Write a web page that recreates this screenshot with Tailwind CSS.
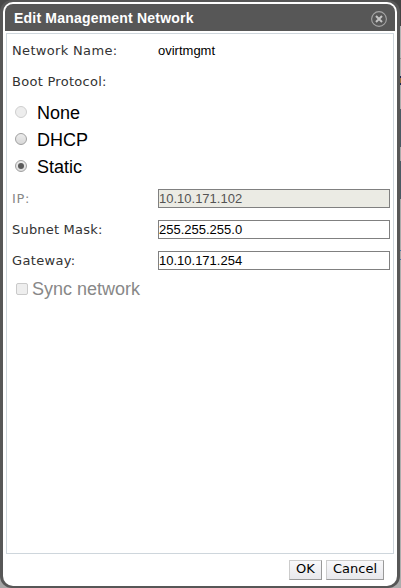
<!DOCTYPE html>
<html lang="en">
<head>
<meta charset="utf-8">
<title>Edit Management Network</title>
<script src="https://cdn.jsdelivr.net/npm/@tailwindcss/browser@4"></script>
</head>
<body class="relative h-[588px] w-[401px] overflow-hidden bg-[#484848] font-['Liberation_Sans',Arial,sans-serif] text-black">
<!-- page behind the dialog -->
<div class="absolute top-0 right-0 flex h-full w-5 flex-col">
  <div class="h-[26px] bg-[#444]"></div>
  <div class="h-[33px] border-b border-[#888] bg-[#b4b4b4]"></div>
  <div class="h-[50px] bg-[#adadad] pt-[17px]"><div class="h-[9px] border-y-2 border-[#182850] bg-[#9a7040]"></div></div>
  <div class="h-[38px] bg-[#4b5a64]"></div>
  <div class="h-[14px] bg-[#aaa]"></div>
  <div class="h-[38px] bg-[#4b5a64]"></div>
  <div class="h-[51px] bg-[#aaa]"></div>
  <div class="h-[10px] border-y border-[#4870a0] bg-[#aaa]"></div>
  <div class="flex-1 bg-[#adadad]"></div>
</div>
<div class="absolute bottom-0 left-0 h-5 w-5 bg-[#a6a6a6]"></div>

<div class="relative h-[588px] w-[400px] rounded-[12px] bg-[#575757] pt-[2px] pr-[3px] pb-[2px] pl-[3px]">
  <div class="flex h-[584px] flex-col rounded-[10px] bg-white px-[2px] pt-[2px]">
    <header class="flex h-[27px] shrink-0 items-center justify-between rounded-t-[8px] bg-[#575757] pr-[8px] pl-[9px]">
      <h1 class="text-[14px] leading-[26px] font-bold tracking-[0.2px] whitespace-nowrap text-white">Edit Management Network</h1>
      <svg class="mt-[3px] h-4 w-4" viewBox="0 0 16 16" fill="none"><circle cx="8" cy="8" r="7.4" stroke="#a5a5a5" stroke-width="1.1"/><path d="M5 5l6 6M11 5l-6 6" stroke="#c4c4c4" stroke-width="2"/></svg>
    </header>
    <main class="mx-px mt-[2px] flex h-[521px] shrink-0 flex-col border border-[#ced6dc] pl-[5px]">
      <div class="flex h-[31px] items-center pt-[2px]">
        <span class="w-[146px] font-['DejaVu_Sans',sans-serif] text-[13px] tracking-[0.33px] whitespace-nowrap text-[#333]">Network Name:</span>
        <span class="text-[13px]">ovirtmgmt</span>
      </div>
      <div class="flex h-[31px] items-center pt-[2px]">
        <span class="font-['DejaVu_Sans',sans-serif] text-[13px] tracking-[0.28px] whitespace-nowrap text-[#333]">Boot Protocol:</span>
      </div>
      <div class="flex flex-col pt-[3px] pl-[3px]">
        <div class="flex h-[27px] items-center"><span class="mr-[10px] mb-px h-3 w-3 rounded-full border border-[#cfcfcf] bg-[#ededed]"></span><span class="mt-px text-[18px]">None</span></div>
        <div class="flex h-[27px] items-center"><span class="mr-[10px] mb-px h-3 w-3 rounded-full border border-[#a0a0a0] bg-linear-to-b from-[#ececec] to-[#d8d8d8]"></span><span class="mt-px text-[18px]">DHCP</span></div>
        <div class="flex h-[27px] items-center"><span class="mr-[10px] mb-px flex h-3 w-3 items-center justify-center rounded-full border border-[#a0a0a0] bg-linear-to-b from-[#ececec] to-[#dcdcdc]"><span class="h-[6px] w-[6px] rounded-full bg-[#5a5a5a]"></span></span><span class="mt-px text-[18px]">Static</span></div>
      </div>
      <div class="mt-[3px] flex h-[31px] items-center">
        <span class="w-[146px] font-['DejaVu_Sans',sans-serif] text-[13px] tracking-[0.7px] text-[#888]">IP:</span>
        <span class="h-[19px] w-[232px] border border-[#808080] bg-[#ebebe4] text-[13px] leading-[17px] text-[#545454]">10.10.171.102</span>
      </div>
      <div class="flex h-[31px] items-center">
        <span class="w-[146px] font-['DejaVu_Sans',sans-serif] text-[13px] tracking-[0.2px] whitespace-nowrap text-[#333]">Subnet Mask:</span>
        <span class="h-[19px] w-[232px] border border-[#808080] text-[13px] leading-[17px]">255.255.255.0</span>
      </div>
      <div class="flex h-[31px] items-center">
        <span class="w-[146px] font-['DejaVu_Sans',sans-serif] text-[13px] tracking-[0.33px] text-[#333]">Gateway:</span>
        <span class="h-[19px] w-[232px] border border-[#808080] text-[13px] leading-[17px]">10.10.171.254</span>
      </div>
      <div class="flex h-[27px] items-center pl-[4px]">
        <span class="mr-[4px] mb-px h-3 w-3 rounded-[2px] border border-[#cacaca] bg-[#eee]"></span>
        <span class="text-[18px] text-[#888]">Sync network</span>
      </div>
    </main>
    <footer class="flex justify-end gap-[4px] pt-[6px] pr-[11px] font-['DejaVu_Sans',sans-serif] text-[13px]">
      <div class="h-5 w-[33px] border border-[#ccc] border-r-[#999] border-b-[#999] bg-linear-to-b from-[#f8f8fa] to-[#e8e8ec] text-center leading-[16px]">OK</div>
      <div class="h-5 w-[58px] border border-[#ccc] border-r-[#999] border-b-[#999] bg-linear-to-b from-[#f8f8fa] to-[#e8e8ec] text-center leading-[16px]">Cancel</div>
    </footer>
  </div>
</div>
</body>
</html>
